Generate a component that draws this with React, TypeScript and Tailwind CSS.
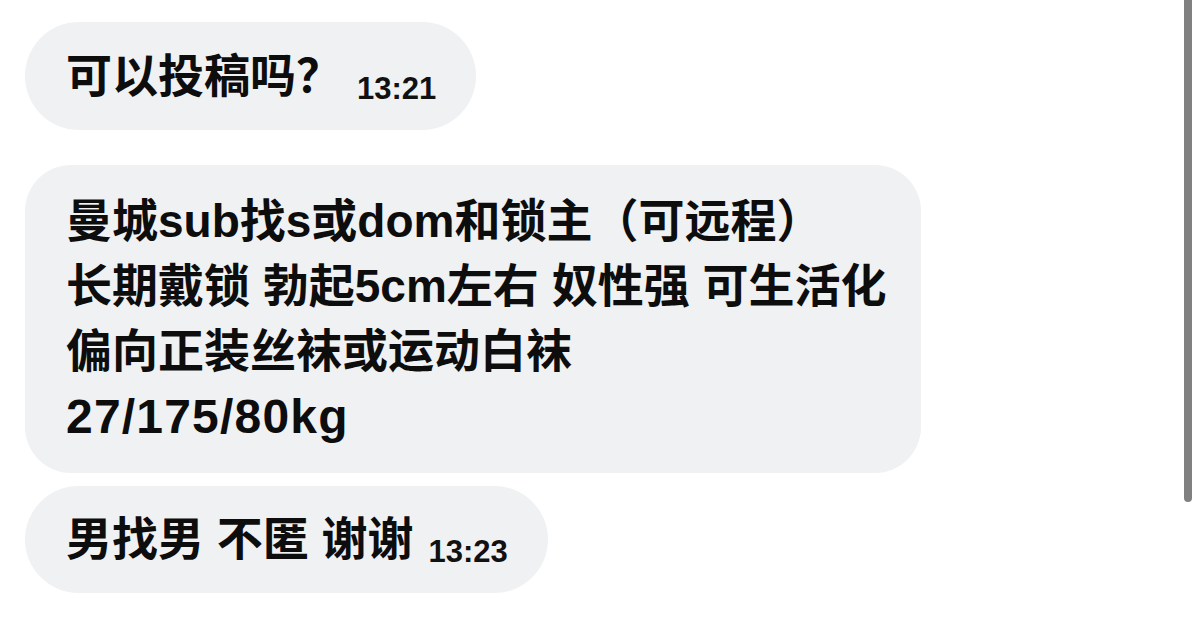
const font = {
  fontFamily: '"Liberation Sans", "Noto Sans CJK SC", sans-serif',
};

function Stamp({ time }: { time: string }) {
  return (
    <span className="ml-[15px] inline-block translate-y-[7px] align-baseline text-[31px] font-bold leading-none text-[#111]">
      {time}
    </span>
  );
}

export default function App() {
  return (
    <div
      className="relative h-[625px] w-[1200px] overflow-hidden bg-white pl-[25px] pt-[22px]"
      style={font}
    >
      <div className="flex flex-col items-start">
        <div className="flex h-[108px] items-center rounded-full bg-[#eff1f3] pl-[41px] pr-[40px] text-[46px] font-bold leading-[65px] text-[#0d0d0d]">
          <div>
            可以投稿吗？
            <Stamp time="13:21" />
          </div>
        </div>

        <div className="mt-[35px] rounded-[46px] bg-[#eff1f3] pl-[41px] pr-[35px] py-[24px] text-[46px] font-bold leading-[65px] text-[#0d0d0d]">
          <div>曼城sub找s或dom和锁主（可远程）</div>
          <div>长期戴锁 勃起5cm左右 奴性强 可生活化</div>
          <div>偏向正装丝袜或运动白袜</div>
          <div className="text-[48px] tracking-[1.2px]">27/175/80kg</div>
        </div>

        <div className="mt-[13px] flex h-[107px] items-center rounded-full bg-[#eff1f3] pl-[41px] pr-[40px] text-[46px] font-bold leading-[65px] text-[#0d0d0d]">
          <div>
            男找男 不匿 谢谢
            <Stamp time="13:23" />
          </div>
        </div>
      </div>

      {/* scroll indicator */}
      <div className="absolute left-[1184px] top-0 h-[502px] w-[8px] rounded-b-full bg-[#808080]" />
    </div>
  );
}
